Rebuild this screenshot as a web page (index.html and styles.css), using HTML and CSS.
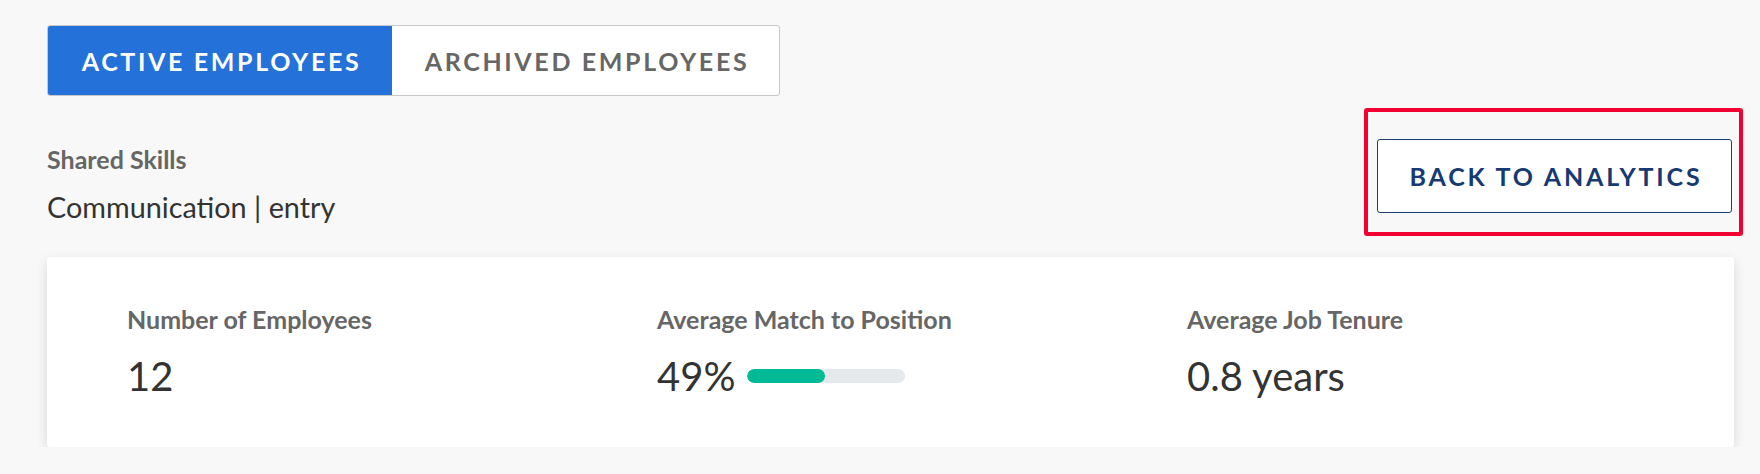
FILE: index.html
```html
<!DOCTYPE html>
<html>
<head>
<meta charset="utf-8">
<link rel="stylesheet" href="styles.css">
</head>
<body>
<div class="page">
  <div class="tabs">
    <div class="tab active">ACTIVE EMPLOYEES</div>
    <div class="tab">ARCHIVED EMPLOYEES</div>
  </div>
  <div class="row">
    <div class="skills">
      <div class="skills-label">Shared Skills</div>
      <div class="skills-value">Communication | entry</div>
    </div>
    <div class="back-wrap">
      <button class="back-btn">BACK TO ANALYTICS</button>
    </div>
  </div>
  <div class="card">
    <div class="stat">
      <div class="stat-label">Number of Employees</div>
      <div class="stat-value">12</div>
    </div>
    <div class="stat">
      <div class="stat-label">Average Match to Position</div>
      <div class="stat-value match">49%<span class="bar"><span class="bar-fill" style="width:49%"></span></span></div>
    </div>
    <div class="stat">
      <div class="stat-label">Average Job Tenure</div>
      <div class="stat-value">0.8 years</div>
    </div>
  </div>
</div>
</body>
</html>
```
FILE: styles.css
```css
* { box-sizing: border-box; }
html, body { margin: 0; padding: 0; }
body {
  background: #f8f8f8;
  font-family: Lato, "Open Sans", sans-serif;
  color: #333;
}
.page {
  padding: 25px 26px 0 47px;
}
.tabs {
  display: inline-flex;
  height: 71px;
  border: 1px solid #c8c8c8;
  border-radius: 3px;
  background: #fff;
  overflow: hidden;
}
.tab {
  display: flex;
  align-items: center;
  justify-content: center;
  font-weight: 700;
  font-size: 25px;
  letter-spacing: 2.65px;
  color: #666;
  padding: 0 0 0 3px;
  width: 387px;
}
.tab.active {
  background: #2371d9;
  color: #fff;
  width: 344px;
}
.row {
  display: flex;
  justify-content: space-between;
  align-items: flex-start;
  margin-top: 43px;
}
.skills {
  padding-top: 5px;
}
.skills-label {
  font-weight: 700;
  font-size: 25px;
  color: #666;
  line-height: 30px;
}
.skills-value {
  font-size: 28.8px;
  color: #333;
  margin-top: 16px;
  line-height: 34px;
}
.back-wrap {
  position: relative;
  margin-right: 2px;
}
.back-wrap::after {
  content: "";
  position: absolute;
  top: -31px;
  left: -13px;
  right: -11px;
  bottom: -23px;
  border: 4px solid #f20032;
  border-radius: 3px;
  pointer-events: none;
}
.back-btn {
  display: block;
  width: 355px;
  height: 74px;
  background: #fff;
  border: 1px solid #1c3d73;
  border-radius: 3px;
  font-family: Lato, "Open Sans", sans-serif;
  font-weight: 700;
  font-size: 25px;
  letter-spacing: 2.8px;
  color: #173a72;
  padding: 0 0 0 3px;
}
.card {
  margin-top: 33px;
  background: #fff;
  border-radius: 3px;
  box-shadow: 0 4px 12px rgba(0,0,0,0.13);
  height: 190px;
  display: grid;
  grid-template-columns: 530px 530px 1fr;
  padding: 47px 0 0 80px;
}
.stat-label {
  font-weight: 700;
  font-size: 25px;
  color: #666;
  line-height: 30px;
}
.stat-value {
  font-size: 40px;
  color: #333;
  margin-top: 18px;
  line-height: 48px;
}
.match {
  display: flex;
  align-items: center;
}
.bar {
  display: inline-block;
  width: 158px;
  height: 14px;
  border-radius: 7px;
  background: #e6e9ec;
  margin-left: 12px;
  overflow: hidden;
}
.bar-fill {
  display: block;
  height: 100%;
  background: #00bb95;
  border-radius: 7px;
}
```
